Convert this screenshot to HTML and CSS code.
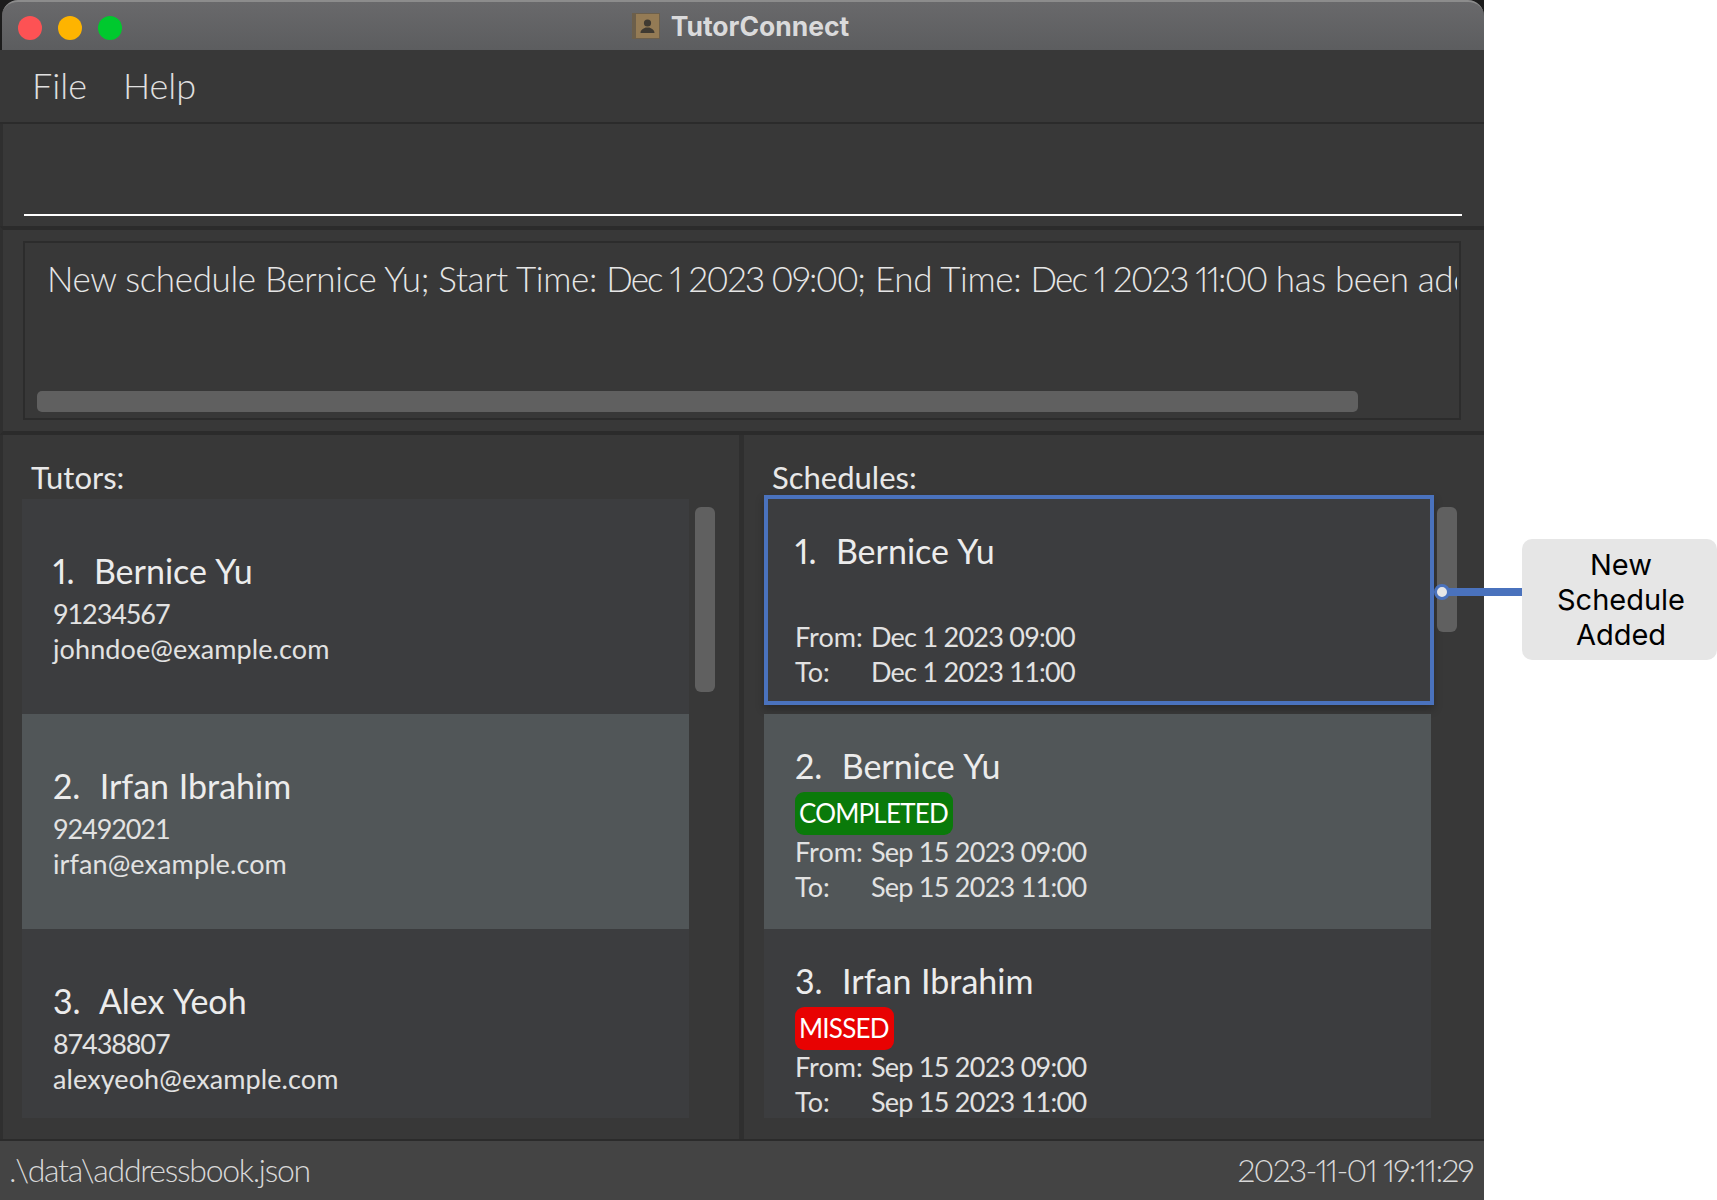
FILE: index.html
```html
<!DOCTYPE html>
<html lang="en">
<head>
  <meta charset="UTF-8" />
  <title>TutorConnect</title>
  <link rel="stylesheet" href="styles.css">
</head>
<body>
  <div class="window">
    <div class="titlebar-back">
      <header class="titlebar">
        <div class="lights">
          <span class="light red"></span>
          <span class="light yellow"></span>
          <span class="light green"></span>
        </div>
        <div class="title">
          <svg class="title-icon" viewBox="0 0 28 26" width="28" height="26">
            <rect x="0" y="0" width="28" height="26" fill="#6c5f4b" />
            <rect x="4" y="1" width="23" height="24" fill="#947b55" />
            <circle cx="15.5" cy="10" r="3.6" fill="#3f3a32" />
            <path d="M8.5 20c0-3.500 3.500-4.500 5-5.500h4c1.500 1 5 2 5 5.500z" fill="#3f3a32" />
          </svg>
          <span>TutorConnect</span>
        </div>
      </header>
    </div>

    <nav class="menubar">
      <span>File</span>
      <span>Help</span>
    </nav>

    <section class="command">
      <div class="command-line"></div>
    </section>

    <section class="result">
      <div class="result-box">
        <div class="result-text">New schedule Bernice Yu; Start Time: <span class="date">Dec 1 2023 09:00</span>; End Time: <span class="date">Dec 1 2023 11:00</span> has been added</div>
        <div class="result-scroll"></div>
      </div>
    </section>

    <main class="panels">
      <section class="panel panel-left">
        <h2 class="panel-label">Tutors:</h2>
        <div class="list-row">
          <div class="list">
            <article class="card tutor">
              <div class="name">1.&nbsp; Bernice Yu</div>
              <div class="detail phone">91234567</div>
              <div class="detail">johndoe@example.com</div>
            </article>
            <article class="card tutor alt">
              <div class="name">2.&nbsp; Irfan Ibrahim</div>
              <div class="detail phone">92492021</div>
              <div class="detail">irfan@example.com</div>
            </article>
            <article class="card tutor">
              <div class="name">3.&nbsp; Alex Yeoh</div>
              <div class="detail phone">87438807</div>
              <div class="detail">alexyeoh@example.com</div>
            </article>
          </div>
          <div class="scrollbar scrollbar-tutors"></div>
        </div>
      </section>

      <section class="panel panel-right">
        <h2 class="panel-label">Schedules:</h2>
        <div class="list-row">
          <div class="list list-schedules">
            <article class="card schedule new">
              <div class="name">1.&nbsp; Bernice Yu</div>
              <div class="status-row"></div>
              <div class="times"><span>From:</span><span>Dec 1 2023 09:00</span><span>To:</span><span>Dec 1 2023 11:00</span></div>
            </article>
            <article class="card schedule alt">
              <div class="name">2.&nbsp; Bernice Yu</div>
              <div class="status-row"><span class="badge completed">COMPLETED</span></div>
              <div class="times"><span>From:</span><span>Sep 15 2023 09:00</span><span>To:</span><span>Sep 15 2023 11:00</span></div>
            </article>
            <article class="card schedule">
              <div class="name">3.&nbsp; Irfan Ibrahim</div>
              <div class="status-row"><span class="badge missed">MISSED</span></div>
              <div class="times"><span>From:</span><span>Sep 15 2023 09:00</span><span>To:</span><span>Sep 15 2023 11:00</span></div>
            </article>
          </div>
          <div class="scrollbar scrollbar-schedules"></div>
        </div>
      </section>
    </main>

    <footer class="statusbar">
      <span>.\data\addressbook.json</span>
      <span class="clock">2023-11-01 19:11:29</span>
    </footer>
  </div>

  <!-- annotation on top of the screenshot -->
  <div class="connector"></div>
  <div class="connector-dot"></div>
  <div class="callout">New<br>Schedule<br>Added</div>
</body>
</html>
```

FILE: styles.css
```css
body {
  margin: 0;
  width: 1717px;
  height: 1200px;
  position: relative;
  overflow: hidden;
  background-color: white;
  font-family: Lato, "Open Sans", sans-serif;
  font-weight: 300;
  font-variant-numeric: proportional-nums;
  color: #e6e6e6;
}

.window {
  width: 1484px;
  height: 1200px;
  display: flex;
  flex-direction: column;
  background-color: #383838;
}

/* title bar */
.titlebar-back {
  background-color: #1c1c1c;
  height: 50px;
}
.titlebar {
  height: 48px;
  margin-left: 2px;
  position: relative;
  display: flex;
  align-items: center;
  justify-content: center;
  border-top: 2px solid #8c8c8c;
  border-radius: 16px 16px 0 0;
  background: linear-gradient(#69696b, #5c5d5f);
}
.lights {
  position: absolute;
  left: 16px;
  top: 14px;
  display: flex;
  gap: 16px;
}
.light {
  width: 24px;
  height: 24px;
  border-radius: 50%;
}
.red { background-color: #fd5254; }
.yellow { background-color: #feb400; }
.green { background-color: #00c92e; }
.title {
  display: flex;
  align-items: center;
  gap: 11px;
  margin-right: 5px;
  font-family: Inter, sans-serif;
  font-weight: 700;
  font-size: 26.5px;
  color: #dadadb;
}

/* menu */
.menubar {
  height: 74px;
  display: flex;
  align-items: center;
  gap: 36px;
  padding: 0 0 2px 32px;
  box-sizing: border-box;
  font-size: 36px;
  color: #e0e0e0;
  border-bottom: 2px solid #2b2b2b;
}

/* command box */
.command {
  height: 102px;
  padding: 0 22px 0 21px;
  border-left: 3px solid #2f2f2f;
  box-sizing: border-box;
}
.command-line {
  margin-top: 90px;
  height: 2px;
  background-color: white;
}

/* result box */
.result {
  height: 209px;
  box-sizing: border-box;
  padding: 11px 23px 11px 20px;
  border-left: 3px solid #2f2f2f;
  border-top: 4px solid #2b2b2b;
  border-bottom: 4px solid #2b2b2b;
}
.result-box {
  height: 100%;
  box-sizing: border-box;
  display: flex;
  flex-direction: column;
  padding: 0 2px 6px 12px;
  border: 2px solid #2c2c2c;
}
.result-text {
  margin: 10px 0 0 10px;
  height: 50px;
  line-height: 50px;
  font-size: 35px;
  letter-spacing: -0.35px;
  white-space: nowrap;
  overflow: hidden;
}
.date { letter-spacing: -1.8px; }
.result-scroll {
  margin-top: auto;
  width: 1321px;
  height: 21px;
  border-radius: 5px;
  background-color: #606060;
}

/* tutors and schedules */
.panels {
  flex: 1;
  display: flex;
  min-height: 0;
}
.panel {
  box-sizing: border-box;
  border-left: 3px solid #2f2f2f;
}
.panel-left {
  width: 739px;
  padding-left: 19px;
}
.panel-right {
  flex: 1;
  border-left-width: 5px;
  padding-left: 20px;
}
.panel-label {
  margin: 0;
  padding: 22px 0 0 9px;
  height: 42px;
  line-height: 40px;
  font-size: 31px;
  font-weight: 400;
  color: #e8e8e8;
}
.panel-right .panel-label { padding-left: 8px; }
.list-row {
  display: flex;
  gap: 6px;
}
.list {
  width: 667px;
}
.list-schedules {
  width: 670px;
  margin-top: -4px;
}
.scrollbar {
  width: 20px;
  margin-top: 8px;
  border-radius: 6px;
  background-color: #606060;
}
.scrollbar-tutors { height: 185px; }
.scrollbar-schedules {
  height: 125px;
  margin-left: -3px;
}

.card {
  width: 667px;
  box-sizing: border-box;
  height: 215px;
  padding-left: 31px;
  background-color: #3c3d3f;
}
.card:last-child { height: 189px; }
.card.alt { background-color: #515658; }
.name {
  height: 40px;
  line-height: 40px;
  font-size: 34px;
  font-weight: 400;
  word-spacing: 1px;
  color: #ececec;
}
.detail {
  height: 35px;
  line-height: 35px;
  font-size: 27px;
  font-weight: 400;
  letter-spacing: 0.1px;
  color: #e2e2e2;
}
.tutor { padding-top: 52px; }
.tutor .phone {
  margin-top: 5px;
  font-variant-numeric: tabular-nums;
  letter-spacing: -1.1px;
}
.schedule { padding-top: 32px; }
.schedule.new {
  width: 670px;
  height: 210px;
  margin-bottom: 9px;
  padding-top: 32px;
  padding-left: 27px;
  border: 4px solid #4a72bd;
  box-shadow: 0 4px 8px rgba(0, 0, 0, 0.25);
}
.status-row {
  height: 48px;
  padding-top: 6px;
  box-sizing: border-box;
}
.badge {
  display: inline-block;
  height: 43px;
  line-height: 43px;
  padding: 0 5px 0 4px;
  border-radius: 9px;
  font-size: 26px;
  font-weight: 400;
  letter-spacing: -0.8px;
  color: white;
}
.completed { background-color: #0a7a0a; }
.missed { background-color: #e80202; }
.times {
  display: grid;
  grid-template-columns: 76px auto;
  justify-content: start;
  line-height: 35px;
  font-size: 27px;
  font-weight: 400;
  color: #e2e2e2;
}
.times span:nth-child(even) {
  font-variant-numeric: tabular-nums;
  letter-spacing: -0.75px;
}

/* status bar */
.statusbar {
  height: 61px;
  flex-shrink: 0;
  box-sizing: border-box;
  display: flex;
  align-items: center;
  justify-content: space-between;
  padding: 0 11px 2px 9px;
  font-size: 32px;
  letter-spacing: -1.3px;
  color: #d8d8d8;
  background-color: #444444;
  border-top: 2px solid #2b2b2b;
}
.clock { letter-spacing: -1.7px; }

/* annotation */
.connector {
  position: absolute;
  left: 1448px;
  top: 588px;
  width: 75px;
  height: 8px;
  background-color: #4a72bd;
}
.connector-dot {
  position: absolute;
  left: 1434px;
  top: 584px;
  width: 10px;
  height: 10px;
  border: 3px solid #4a72bd;
  border-radius: 50%;
  background-color: #e6e6e6;
}
.callout {
  position: absolute;
  left: 1522px;
  top: 539px;
  width: 195px;
  height: 121px;
  box-sizing: border-box;
  padding: 8px 0 0 3px;
  border-radius: 10px;
  background-color: #e6e6e6;
  font-family: Inter, sans-serif;
  font-weight: 400;
  font-size: 29px;
  line-height: 35px;
  text-align: center;
  color: black;
}
```
